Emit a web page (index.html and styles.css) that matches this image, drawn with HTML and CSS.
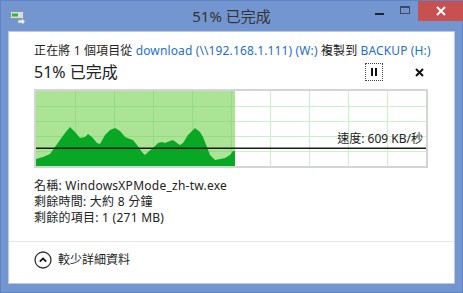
FILE: index.html
```html
<!DOCTYPE html>
<html lang="zh-Hant">
<head>
    <meta charset="UTF-8">
    <title>51% 已完成</title>
    <link rel="stylesheet" href="styles.css">
</head>
<body>
<div class="window">
    <div class="titlebar">
        <div class="app-icon">
            <svg width="16" height="14" viewBox="0 0 16 14">
                <rect x="0.5" y="1.5" width="13" height="7" rx="1" fill="#d8dde4" stroke="#8a96a6"/>
                <rect x="2" y="3.5" width="6" height="3" fill="#22c02a"/>
                <path d="M8 10 h4 v-2 l3 3.5 -3 3.5 v-2 h-4z" fill="#f2f4f7" stroke="#9aa4b2" stroke-width="0.8"/>
            </svg>
        </div>
        <div class="title">51% 已完成</div>
        <div class="controls">
            <span class="ctl ctl-min"><i></i></span>
            <span class="ctl ctl-max"><i></i></span>
            <span class="ctl ctl-close">
                <svg width="10" height="10" viewBox="0 0 10 10"><path d="M1 1 L9 9 M9 1 L1 9" stroke="#fff" stroke-width="2"/></svg>
            </span>
        </div>
    </div>

    <div class="client">
        <div class="main">
            <p class="summary">正在將 1 個項目從 <a>download (\\192.168.1.111) (W:)</a> 複製到 <a>BACKUP (H:)</a></p>
            <div class="status-row">
                <span class="percent">51% 已完成</span>
                <span class="pause"><i></i><i></i></span>
                <span class="cancel">
                    <svg width="9" height="9" viewBox="0 0 9 9"><path d="M1 1 L8 8 M8 1 L1 8" stroke="#111" stroke-width="2"/></svg>
                </span>
            </div>

            <div class="graph">
                <svg width="390" height="75" viewBox="0 0 390 75">
                    <rect x="0" y="0" width="199" height="75" fill="#abe495"/>
                    <g stroke="#c9f2c6" stroke-width="1">
                        <path d="M234.5 0 V75 M273.5 0 V75 M312.5 0 V75 M351.5 0 V75 M199 15.5 H390 M199 30.5 H390 M199 45.5 H390 M199 60.5 H390"/>
                    </g>
                    <g stroke="#96db84" stroke-width="1">
                        <path d="M39.5 0 V75 M78.5 0 V75 M117.5 0 V75 M156.5 0 V75 M195.5 0 V75 M0 15.5 H199 M0 30.5 H199 M0 45.5 H199 M0 60.5 H199"/>
                    </g>
                    <polygon fill="#08a824" points="0,68 7,66 14,63 19,56 24,49 29,42 34,36 39,41 44,47 49,46 52,43 56,46 61,52 64,53 69,44 74,39 79,37 84,40 89,46 94,48 97,49 101,54 106,61 109,64 112,61 117,57 122,52 126,51 129,52 134,50 137,49 141,52 144,54 147,52 152,44 159,37 164,41 167,46 171,56 174,64 179,69 184,68 189,67 194,64 197,60 199,60 199,75 0,75"/>
                    <rect x="0" y="56.5" width="390" height="1.5" fill="#1a1a1a"/>
                </svg>
                <span class="speed">速度: 609 KB/秒</span>
            </div>

            <div class="details">
                <p>名稱: WindowsXPMode_zh-tw.exe</p>
                <p>剩餘時間: 大約 8 分鐘</p>
                <p>剩餘的項目: 1 (271 MB)</p>
            </div>
        </div>

        <div class="footer">
            <span class="toggle">
                <svg width="18" height="18" viewBox="0 0 18 18">
                    <circle cx="9" cy="9" r="8" fill="none" stroke="#333" stroke-width="1.3"/>
                    <path d="M5.8 10.6 L9 7.4 L12.2 10.6" fill="none" stroke="#111" stroke-width="1.8"/>
                </svg>
            </span>
            <span>較少詳細資料</span>
        </div>
    </div>
</div>
</body>
</html>
```

FILE: styles.css
```css
body {
    margin: 0;
    font-family: "Noto Sans", "Noto Sans CJK TC", sans-serif;
    color: #222;
    background: #fff
}

p {
    margin: 0
}

.window {
    width: 463px;
    height: 293px;
    box-sizing: border-box;
    background: #7396d0;
    border: 1px solid #5f84c4
}

.titlebar {
    display: grid;
    grid-template-columns: 1fr auto 1fr;
    height: 30px
}

.app-icon {
    padding: 6px 0 0 9px
}

.title {
    font-size: 15px;
    line-height: 30px;
    color: #333
}

.controls {
    display: flex;
    justify-content: flex-end;
    align-items: flex-start;
    margin-right: -1px
}

.ctl {
    display: flex;
    align-items: center;
    justify-content: center;
    height: 20px
}

.ctl-min {
    width: 26px
}

.ctl-min i {
    display: block;
    width: 9px;
    height: 2px;
    margin-top: 5px;
    background: #1e2430
}

.ctl-max {
    width: 26px
}

.ctl-max i {
    display: block;
    width: 8px;
    height: 5px;
    margin-top: -3px;
    border: 1px solid #3d4a60;
    border-top-width: 2px
}

.ctl-close {
    width: 45px;
    background: #c75050
}

.client {
    height: 253px;
    margin: 0 7px 0 7px;
    box-sizing: border-box;
    background: #fff;
    border: 1px solid #b9c9e6
}

.main {
    padding: 11px 26px 0 25px
}

.summary {
    font-size: 12px;
    line-height: 16px;
    letter-spacing: 0.13px;
    white-space: nowrap
}

.summary a {
    color: #1f6fc5
}

.status-row {
    display: flex;
    align-items: center;
    height: 22px;
    margin-top: 2px
}

.percent {
    flex: 1;
    font-size: 16px;
    line-height: 22px
}

.pause {
    display: flex;
    gap: 2px;
    align-items: center;
    justify-content: center;
    width: 16px;
    height: 16px;
    border: 1px dotted #444
}

.pause i {
    display: block;
    width: 2px;
    height: 8px;
    background: #111
}

.cancel {
    display: flex;
    justify-content: center;
    width: 16px;
    margin: 0 1px 0 28px
}

.graph {
    position: relative;
    width: 390px;
    height: 75px;
    margin-top: 6px;
    border: 2px solid #d4d4d4
}

.graph svg {
    display: block
}

.speed {
    position: absolute;
    right: 3px;
    top: 40px;
    font-size: 12px;
    line-height: 16px;
    color: #222
}

.details {
    margin-top: 10px;
    font-size: 12px;
    line-height: 16px;
    letter-spacing: 0.25px
}

.footer {
    display: flex;
    align-items: center;
    gap: 6px;
    margin-top: 15px;
    padding: 9px 25px;
    border-top: 1px solid #e6e6e6;
    font-size: 12px;
    line-height: 18px
}

.toggle svg {
    display: block
}
```
